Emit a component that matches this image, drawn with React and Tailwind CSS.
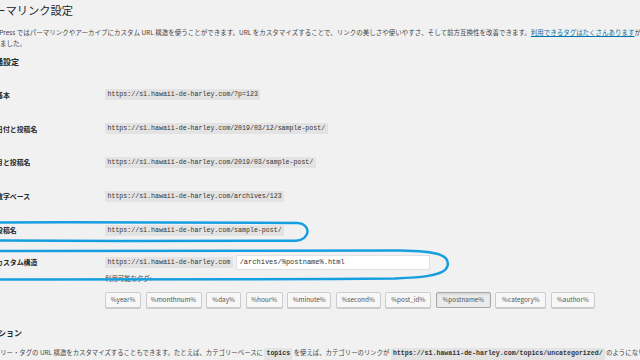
import React from "react";

const mono = "font-['Liberation_Mono',monospace]";

function Code({ children }) {
  return (
    <code className={`inline-block bg-[#e3e3e3] px-[2.5px] h-[11px] leading-[11px] ${mono} text-[6.6px] text-[#333]`}>
      {children}
    </code>
  );
}

function Row({ label, url }) {
  return (
    <div className="flex items-center h-[33.8px]">
      <div className="w-[122px] pl-[13px] text-[6.9px] font-bold text-[#23282d] whitespace-nowrap">{label}</div>
      <Code>{url}</Code>
    </div>
  );
}

const tags = [
  ["%year%", "w-[36px]"],
  ["%monthnum%", "w-[56px]"],
  ["%day%", "w-[35px]"],
  ["%hour%", "w-[37px]"],
  ["%minute%", "w-[44px]"],
  ["%second%", "w-[45px]"],
  ["%post_id%", "w-[46px]"],
  ["%postname%", "w-[55px]"],
  ["%category%", "w-[51px]"],
  ["%author%", "w-[44px]"],
];

export default function App() {
  return (
    <div className="w-[640px] h-[360px] overflow-hidden bg-[#f1f1f1] relative font-['Noto_Sans_CJK_JP',sans-serif] text-[#444]">
      <div className="ml-[-17px] w-[720px]">
        <h1 className="h-[20px] leading-[20px] text-[11.25px] font-normal text-[#23282d] whitespace-nowrap">パーマリンク設定</h1>
        <p className="mt-[6.5px] text-[6.5px] leading-[11px] whitespace-nowrap">
          WordPress ではパーマリンクやアーカイブにカスタム URL 構造を使うことができます。URL をカスタマイズすることで、リンクの美しさや使いやすさ、そして前方互換性を改善できます。
          <a className="text-[#0073aa] underline">利用できるタグはたくさんあります</a>が、いくつか手始めに使えるものを用意しました。
        </p>
        <p className="pl-[10.5px] text-[6.5px] leading-[11px] whitespace-nowrap">しました。</p>
        <h2 className="ml-[4px] mt-[6.5px] h-[14px] leading-[14px] text-[8px] font-bold text-[#23282d] whitespace-nowrap">共通設定</h2>

        <div className="mt-[9px]">
          <Row label="基本" url="https://s1.hawaii-de-harley.com/?p=123" />
          <Row label="日付と投稿名" url="https://s1.hawaii-de-harley.com/2019/03/12/sample-post/" />
          <Row label="月と投稿名" url="https://s1.hawaii-de-harley.com/2019/03/sample-post/" />
          <Row label="数字ベース" url="https://s1.hawaii-de-harley.com/archives/123" />
          <Row label="投稿名" url="https://s1.hawaii-de-harley.com/sample-post/" />
          <div className="flex items-start pt-[8px]">
            <div className="w-[122px] pl-[13px] h-[15px] leading-[15px] text-[6.9px] font-bold text-[#23282d] whitespace-nowrap">カスタム構造</div>
            <div className="flex flex-col">
              <div className="flex items-center gap-[3px]">
                <Code>https://s1.hawaii-de-harley.com</Code>
                <div className={`w-[194px] h-[15px] bg-white border border-[#e2e2e2] pl-[3px] leading-[13px] ${mono} text-[7px] text-[#333] whitespace-nowrap`}>
                  /archives/%postname%.html
                </div>
              </div>
              <div className="mt-[4px] h-[9px] leading-[9px] text-[6.4px] whitespace-nowrap">利用可能なタグ:</div>
              <div className="mt-[9px] flex gap-[4.55px]">
                {tags.map(([t, w]) => (
                  <div
                    key={t}
                    className={`${w} h-[16px] flex items-center justify-center rounded-[2px] text-[6.4px] text-[#555] whitespace-nowrap ${
                      t === "%postname%"
                        ? "bg-[#ebebeb] border border-[#a8a8a8] shadow-[inset_0_1px_2px_rgba(0,0,0,0.12)]"
                        : "bg-[#f7f7f7] border border-[#cccccc] shadow-[0_1px_0_#cccccc]"
                    }`}
                  >
                    {t}
                  </div>
                ))}
              </div>
            </div>
          </div>
        </div>

        <h2 className="ml-[-1px] mt-[18px] h-[14px] leading-[14px] text-[8px] font-bold text-[#23282d] whitespace-nowrap">オプション</h2>
        <p className="ml-[-2px] mt-[7px] h-[12px] leading-[12px] text-[6.4px] whitespace-nowrap">
          カテゴリー・タグの URL 構造をカスタマイズすることもできます。たとえば、カテゴリーベースに{" "}
          <code className={`inline-block bg-[#e3e3e3] px-[2px] h-[12px] leading-[12px] ${mono} font-bold text-[6.6px] text-[#333]`}>topics</code>{" "}
          を使えば、カテゴリーのリンクが{" "}
          <code className={`inline-block bg-[#e3e3e3] px-[2px] h-[12px] leading-[12px] ${mono} font-bold text-[6.6px] text-[#333]`}>https://s1.hawaii-de-harley.com/topics/uncategorized/</code>{" "}
          のようになります。
        </p>
      </div>

      <svg className="absolute left-0 top-0 pointer-events-none" width="640" height="360" viewBox="0 0 640 360" fill="none">
        <path
          d="M -20 222.5 C 100 222, 250 222, 298 223 C 311 224, 311 239.5, 296 240.8 C 200 241.5, 80 241, -20 240.5"
          stroke="#169fe0"
          strokeWidth="2.5"
          strokeLinecap="round"
        />
        <path
          d="M -20 251 C 150 250.5, 330 250, 400 250.5 C 440 251, 450 256, 447.5 266 C 445 276, 420 277.5, 395 278.5 C 250 280, 100 280, -20 279.5"
          stroke="#169fe0"
          strokeWidth="2.5"
          strokeLinecap="round"
        />
      </svg>
    </div>
  );
}
